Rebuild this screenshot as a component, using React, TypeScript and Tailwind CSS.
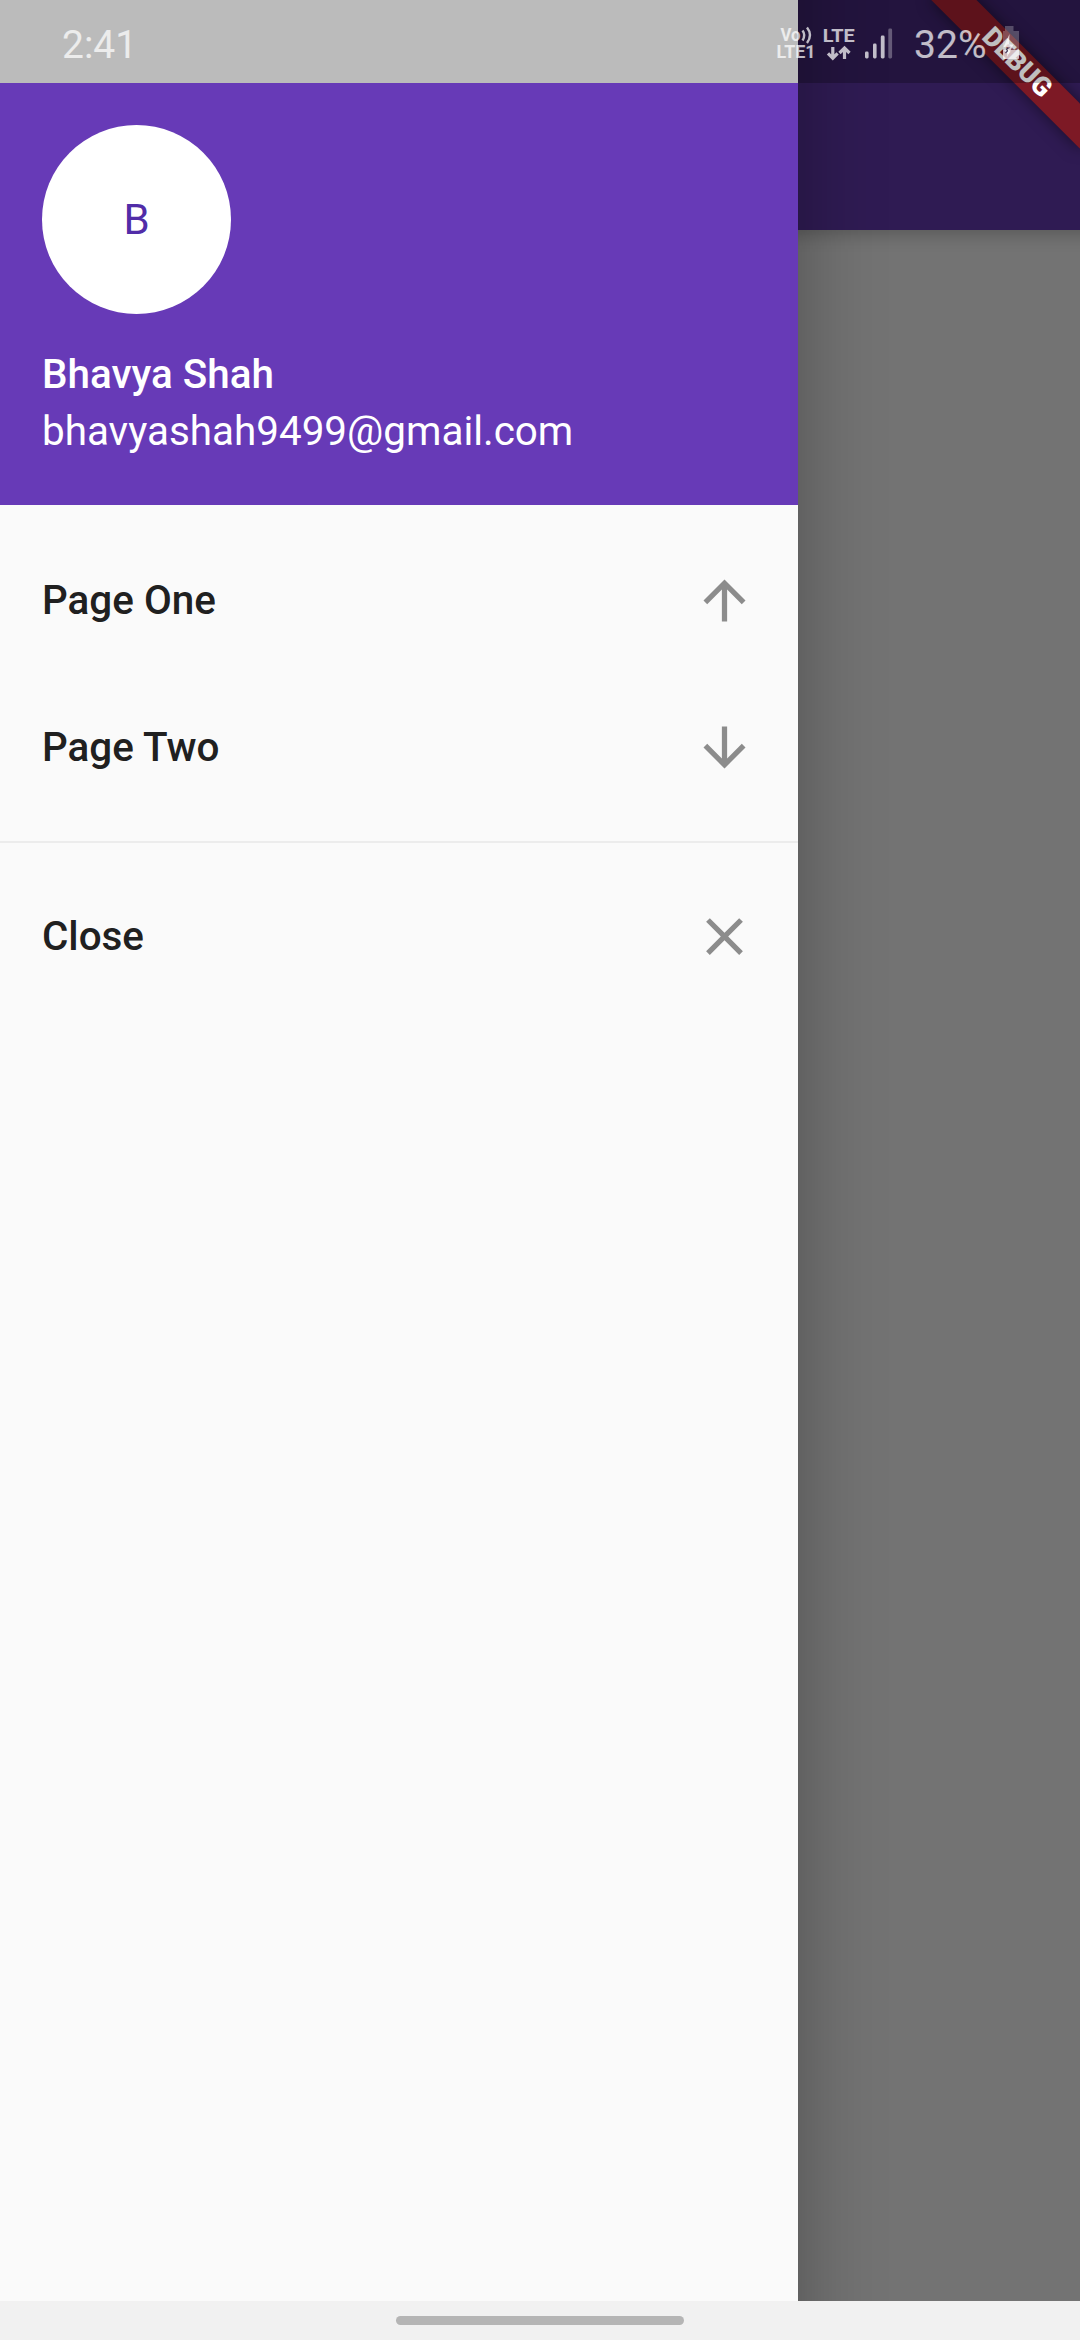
import React from "react";

const font = "font-['Roboto',sans-serif]";

function ArrowUp() {
  return (
    <svg viewBox="0 0 24 24" className="size-[63px] fill-[#8c8c8c]">
      <path d="M4 12l1.41 1.41L11 7.83V20h2V7.83l5.58 5.59L20 12l-8-8-8 8z" />
    </svg>
  );
}

function ArrowDown() {
  return (
    <svg viewBox="0 0 24 24" className="size-[63px] fill-[#8c8c8c]">
      <path d="M20 12l-1.41-1.41L13 16.17V4h-2v12.17l-5.58-5.59L4 12l8 8 8-8z" />
    </svg>
  );
}

function Cross() {
  return (
    <svg viewBox="0 0 24 24" className="size-[63px] fill-[#8c8c8c]">
      <path d="M19 6.41L17.59 5 12 10.59 6.41 5 5 6.41 10.59 12 5 17.59 6.41 19 12 13.41 17.59 19 19 17.59 13.41 12z" />
    </svg>
  );
}

function Tile({ label, icon }: { label: string; icon: React.ReactNode }) {
  return (
    <li className="flex h-[147px] items-center justify-between px-[42px]">
      <span className="text-[40.4px] font-medium leading-[48px] text-[#202020]">{label}</span>
      {icon}
    </li>
  );
}

function StatusIcons() {
  return (
    <svg width="304" height="83" viewBox="776 0 304 83" className="fill-white/72">
      <g className="font-['Roboto',sans-serif] font-bold">
        <text x="780.5" y="41.3" fontSize="18.5" textLength="20" lengthAdjust="spacingAndGlyphs">Vo</text>
        <text x="776.5" y="58" fontSize="18" textLength="39" lengthAdjust="spacingAndGlyphs">LTE1</text>
        <text x="822.8" y="41.7" fontSize="19" textLength="32" lengthAdjust="spacingAndGlyphs">LTE</text>
      </g>
      <g className="fill-none stroke-white/72" strokeWidth="2.4">
        <path d="M802.5 30.5Q806 35 802.5 40.5" />
        <path d="M807 27.5Q813 35 807 43" />
      </g>
      <g className="fill-none stroke-white/72" strokeWidth="3.2">
        <path d="M832.8 47V58M828 53.3L832.8 58.3L837.6 53.3" />
        <path d="M844.5 59V48.5M839.5 53L844.5 48L849.5 53" />
      </g>
      <rect x="865" y="51.5" width="3.6" height="7" rx="1.4" />
      <rect x="873" y="43.5" width="3.6" height="15" rx="1.4" />
      <rect x="880.8" y="35.5" width="3.8" height="23" rx="1.4" />
      <rect x="888.3" y="28.5" width="3.8" height="30" rx="1.4" className="fill-white/30" />
      <text x="914" y="58.3" fontSize="39.5" textLength="72.5" lengthAdjust="spacingAndGlyphs" className="font-['Roboto',sans-serif]">
        32%
      </text>
      <path d="M1005 26h8.5v5h5.5v19h-16v-19h2z" className="fill-white/25" />
      <path d="M1003 50h16v8q0 1-1 1h-14q-1 0-1-1z" />
      <path d="M1009.5 34l-6 13h4.5l-1 10 6.5-12.5h-4.5z" />
      <path d="M1009.5 47.5l-3 1.5 1 2-2 2" className="fill-none stroke-[#22133a]/80" strokeWidth="1.2" />
    </svg>
  );
}

export default function App() {
  return (
    <div className={`relative flex h-[2340px] w-[1080px] flex-col overflow-hidden bg-[#737373] ${font}`}>
      <div className="relative flex-1 overflow-hidden">
        <div className="-mx-6 h-[230px] bg-[#2f1b53] shadow-[0_5px_16px_rgba(0,0,0,0.22)]" />

        {/* Drawer shadow, taller than the drawer so it stays even at both ends */}
        <div className="absolute -inset-y-24 left-0 w-[798px] shadow-[0_0_80px_rgba(0,0,0,0.3)]" />

        <aside className="absolute inset-y-0 left-0 flex w-[798px] flex-col bg-[#fafafa]">
          <div className="h-[83px]" />
          <header className="h-[422px] bg-[#673ab7] px-[42px] pt-[42px] text-white">
            <div className="flex size-[189px] items-center justify-center rounded-full bg-white text-[42px] text-[#512da8]">
              B
            </div>
            <p className="mt-[37px] text-[40.4px] font-medium leading-[48px]">Bhavya Shah</p>
            <p className="mt-[9px] text-[40.4px] leading-[48px]">bhavyashah9499@gmail.com</p>
          </header>
          <ul className="mt-[22px]">
            <Tile label="Page One" icon={<ArrowUp />} />
            <Tile label="Page Two" icon={<ArrowDown />} />
          </ul>
          <hr className="mt-[20px] h-[2px] border-0 bg-[#ececec]" />
          <ul className="mt-[20px]">
            <Tile label="Close" icon={<Cross />} />
          </ul>
        </aside>

        <div className="absolute right-[-41.9px] top-[47.4px] flex h-[31.5px] w-[210px] rotate-45 items-center justify-center bg-[#7d1925] text-[26.8px] font-black leading-none text-white shadow-[0_0_16px_rgba(0,0,0,0.5)]">
          DEBUG
        </div>
      </div>

      <div className="flex h-[39px] justify-center bg-[#f1f1f1] pt-[15px]">
        <div className="h-[9px] w-[288px] rounded-full bg-[#b5b5b5]" />
      </div>

      <div className="absolute inset-x-0 top-0 flex h-[83px] items-center justify-between bg-black/25 pl-[62px]">
        <span className="mt-[8px] text-[39px] text-white/72">2:41</span>
        <StatusIcons />
      </div>
    </div>
  );
}
